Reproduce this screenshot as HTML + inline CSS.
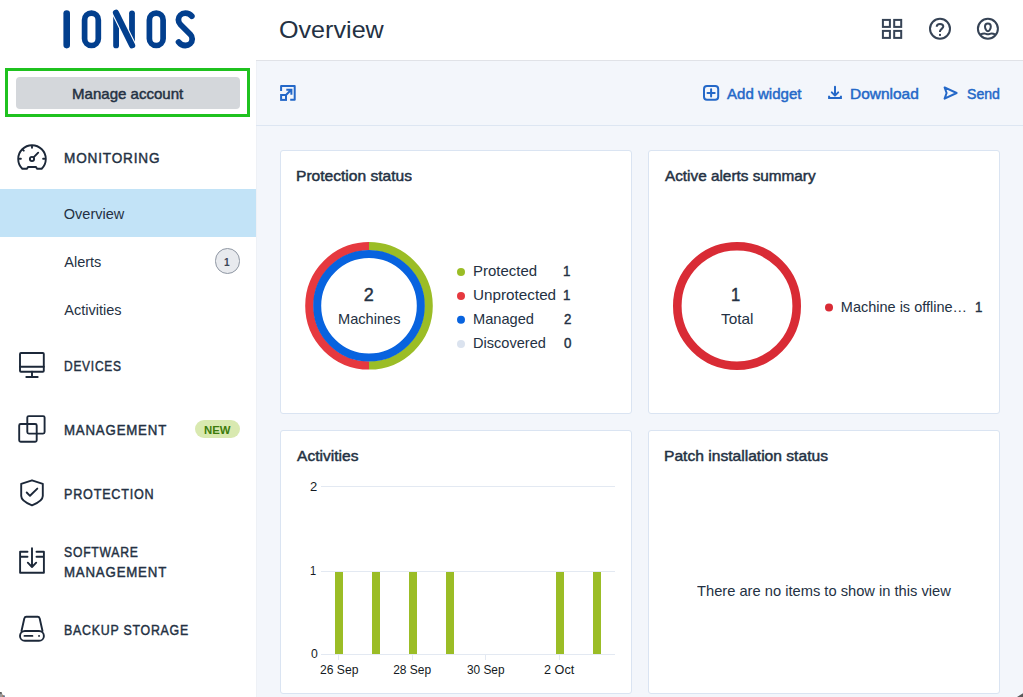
<!DOCTYPE html>
<html><head><meta charset="utf-8">
<style>
*{box-sizing:border-box;margin:0;padding:0}
html,body{width:1023px;height:697px;overflow:hidden;background:#f3f6fb;font-family:"Liberation Sans",sans-serif;color:#243143}
.a{position:absolute}
.t{position:absolute;white-space:nowrap;line-height:1}
.sb{position:absolute;left:0;top:0;width:256px;height:697px;background:#fff}
.nav{font-size:14.5px;font-weight:bold;transform-origin:0 0}
.sub{font-size:14.5px}
svg{position:absolute;overflow:visible}
.ic{fill:none;stroke:#1c2839;stroke-width:1.9;stroke-linecap:round;stroke-linejoin:round}
.hic{fill:none;stroke:#364355;stroke-width:2}
.bl{fill:none;stroke:#2468c8;stroke-width:2;stroke-linecap:round;stroke-linejoin:round}
.card{position:absolute;background:#fff;border:1px solid #dae4f2;border-radius:3px}
.ct{font-size:14.5px;font-weight:bold}
.lk{color:#2468c8;font-size:14.5px;font-weight:bold}
</style></head><body>

<!-- Sidebar -->
<div class="sb"></div>
<div class="a" style="left:256px;top:61px;width:1px;height:636px;background:#eef1f6"></div>

<!-- IONOS logo -->
<svg style="left:0;top:0" width="256" height="60" viewBox="0 0 256 60">
 <g fill="none" stroke="#023f8e" stroke-linecap="round" stroke-linejoin="round">
  <line x1="66.7" y1="13.6" x2="66.7" y2="45.1" stroke-width="6.6"/>
  <rect x="84.6" y="13.1" width="13.7" height="32.4" rx="6.85" stroke-width="5.7"/>
  <line x1="116.1" y1="13.3" x2="116.1" y2="45.4" stroke-width="5.8"/>
  <line x1="132" y1="13.3" x2="132" y2="45.4" stroke-width="5.8"/>
  <line x1="116" y1="12.8" x2="132.1" y2="45.3" stroke-width="8.4" stroke="#fff"/>
  <line x1="116" y1="12.8" x2="132.1" y2="45.3" stroke-width="6.2"/>
  <rect x="149.4" y="13.1" width="13.7" height="32.4" rx="6.85" stroke-width="5.7"/>
  <path d="M191.8,16.2 C190,14 187.6,13.2 185.3,13.2 C181.3,13.2 178.4,16.3 178.4,19.8 C178.4,21.8 179.2,23.3 180.4,24.5 L190.4,34.5 C191.6,35.7 192.2,37.2 192.2,39 C192.2,42.8 189,45.5 185.3,45.5 C182.6,45.5 180.2,44.2 178.6,42" stroke-width="5.8"/>
 </g>
</svg>

<!-- Manage account -->
<div class="a" style="left:5px;top:68px;width:245px;height:49px;border:3px solid #1fc21f"></div>
<div class="a" style="left:16px;top:77px;width:224px;height:32px;background:#d4d7db;border-radius:4px"></div>

<!-- Monitoring -->
<svg style="left:12px;top:138px" width="40" height="40" viewBox="0 0 40 40">
 <path class="ic" d="M10.3,30.8 A13.8,13.8 0 1 1 29.7,30.8 L25,30.8 L24,29 L16,29 L15,30.8 Z"/>
 <path class="ic" d="M20,8.4 V9.8 M10.9,11.8 L11.8,12.7 M7.4,20.7 H8.9 M31.1,20.7 H32.6 M21.6,19.3 L26.2,14.7"/>
 <circle class="ic" cx="20" cy="21" r="2.1"/>
</svg>

<div class="a" style="left:0;top:189px;width:256px;height:48px;background:#c2e3f7"></div>
<div class="a" style="left:214.5px;top:248px;width:25.5px;height:25.5px;border-radius:50%;background:#e8eaee;border:1px solid #8f97a3"></div>

<!-- Devices -->
<svg style="left:12px;top:346px" width="40" height="40" viewBox="0 0 40 40">
 <rect class="ic" x="8" y="7" width="23.8" height="18.8" rx="1"/>
 <path class="ic" d="M8,20.7 H31.8 M20,25.8 V30.6 M14.3,31 H25.7"/>
</svg>

<!-- Management -->
<svg style="left:12px;top:410px" width="40" height="40" viewBox="0 0 40 40">
 <rect class="ic" x="15.3" y="6.1" width="17.3" height="17.5" rx="1.5"/>
 <rect class="ic" x="7.2" y="14" width="17.5" height="17.8" rx="1.5"/>
</svg>
<div class="a" style="left:195px;top:420px;width:45px;height:18px;border-radius:9px;background:#d9e9b0"></div>

<!-- Protection -->
<svg style="left:12px;top:474px" width="40" height="40" viewBox="0 0 40 40">
 <path class="ic" d="M20,6.3 L9.2,9.8 V22 C9.2,26 14,29 20,31.3 C26,29 30.8,26 30.8,22 V9.8 Z"/>
 <path class="ic" d="M14.7,18.5 L18,21.8 L25.3,14.6"/>
</svg>

<!-- Software management -->
<svg style="left:12px;top:542px" width="40" height="40" viewBox="0 0 40 40">
 <path class="ic" d="M15.5,9.8 H8.1 V30.8 H31.9 V9.8 H24.5 M8.1,14.7 H15.5 M24.5,14.7 H31.9 M20,6.3 V25 M15.8,20.7 L20,25 L24.2,20.7"/>
</svg>

<!-- Backup storage -->
<svg style="left:12px;top:610px" width="40" height="40" viewBox="0 0 40 40">
 <path class="ic" d="M9.5,21 L12.3,8.5 C12.6,7.5 13.3,6.8 14.3,6.8 H25.7 C26.7,6.8 27.4,7.5 27.7,8.5 L30.5,21"/>
 <rect class="ic" x="8" y="21" width="23.9" height="9.8" rx="4.9"/>
 <path class="ic" d="M12.5,25.9 H20.4 M27,25.9 H27.1"/>
</svg>

<!-- Header -->
<div class="a" style="left:256px;top:0;width:767px;height:60px;background:#fff"></div>
<div class="a" style="left:256px;top:60px;width:767px;height:1px;background:#e0e2e7"></div>

<svg style="left:874px;top:10px" width="140" height="40" viewBox="0 0 140 40">
 <g class="hic">
  <rect x="8.9" y="9.9" width="7" height="7"/>
  <rect x="20.2" y="9.9" width="7" height="7"/>
  <rect x="8.9" y="20.9" width="7" height="7"/>
  <rect x="20.2" y="20.9" width="7" height="7"/>
  <circle cx="66" cy="18.75" r="10"/>
  <path d="M62.7,16.7 C62.7,14.9 64.2,13.9 66,13.9 C67.9,13.9 69.3,15 69.3,16.6 C69.3,18.5 66,19.3 66,21.3 V22.1" stroke-linecap="butt"/>
  <circle cx="113.9" cy="18.75" r="10"/>
  <path d="M113.9,13.4 C115.6,13.4 116.8,14.6 116.8,16.6 C116.8,18.8 115.2,21.2 113.9,21.2 C112.6,21.2 111,18.8 111,16.6 C111,14.6 112.2,13.4 113.9,13.4 Z"/>
  <path d="M106.2,24.7 C107.5,24 109,23.4 110.3,23.4 C111.5,23.4 112.5,24.3 113.9,24.3 C115.3,24.3 116.3,23.4 117.5,23.4 C118.8,23.4 120.3,24 121.5,24.7"/>
 </g>
 <rect x="65" y="23.9" width="2" height="2" fill="#3a4657"/>
</svg>

<!-- Toolbar -->
<div class="a" style="left:256px;top:125px;width:767px;height:1px;background:#dde6f2"></div>
<svg style="left:274px;top:78px" width="30" height="30" viewBox="0 0 30 30">
 <path d="M7.1,12.9 V8 H20.7 V21.7 H16.2" fill="none" stroke="#2468c8" stroke-width="2" stroke-linejoin="round"/>
 <rect x="7.1" y="17" width="4.9" height="4.9" fill="none" stroke="#2468c8" stroke-width="2"/>
 <path d="M12,17 L17.2,11.8 M12.3,11.8 H17.4 V16.8" fill="none" stroke="#2468c8" stroke-width="2"/>
</svg>

<svg style="left:696px;top:76px" width="330" height="34" viewBox="0 0 330 34">
 <rect class="bl" x="8" y="10" width="14.2" height="13.8" rx="3"/>
 <path class="bl" d="M15.1,13.3 V20.5 M11.5,16.9 H18.7" stroke-linecap="butt"/>
 <path class="bl" d="M139,10.8 V19.5 M135.8,16.4 L139,19.6 L142.2,16.4" stroke-linecap="butt" stroke-linejoin="miter"/>
 <path d="M133.1,19.8 V22 H144.9 V19.8" fill="none" stroke="#2468c8" stroke-width="2"/>
 <path class="bl" d="M248.6,11.4 L260.6,17 L248.6,22.6 L250.6,17 Z" stroke-width="1.8"/>
</svg>

<!-- Cards -->
<div class="card" style="left:280px;top:150px;width:352px;height:264px"></div>
<div class="card" style="left:648px;top:150px;width:352px;height:264px"></div>
<div class="card" style="left:280px;top:430px;width:352px;height:264px"></div>
<div class="card" style="left:648px;top:430px;width:352px;height:264px"></div>


<!-- Protection donut -->
<svg style="left:281px;top:151px" width="351" height="263" viewBox="281 151 351 263">
 <path d="M369,246.2 A59.6,59.6 0 0 1 369,365.4" fill="none" stroke="#9bbd26" stroke-width="8.4"/>
 <path d="M369,365.4 A59.6,59.6 0 0 1 369,246.2" fill="none" stroke="#e6393f" stroke-width="8.4"/>
 <circle cx="369" cy="305.8" r="51.8" fill="none" stroke="#0863df" stroke-width="8"/>
 <circle cx="461" cy="271.9" r="4" fill="#9bbd26"/>
 <circle cx="461" cy="295.9" r="4" fill="#e6393f"/>
 <circle cx="461" cy="319.8" r="4" fill="#0863df"/>
 <circle cx="461" cy="343.9" r="4" fill="#dbe3ef"/>
</svg>

<!-- Alerts donut -->
<svg style="left:649px;top:151px" width="350" height="263" viewBox="649 151 350 263">
 <circle cx="737" cy="306" r="59.7" fill="none" stroke="#d92b35" stroke-width="8.6"/>
 <circle cx="829" cy="307.6" r="4" fill="#d92b35"/>
</svg>

<!-- Activities chart -->
<svg style="left:281px;top:431px" width="350" height="263" viewBox="281 431 350 263">
 <g stroke="#e3e9f2" stroke-width="1">
  <line x1="321" y1="486.5" x2="615" y2="486.5"/>
  <line x1="321" y1="571.5" x2="615" y2="571.5"/>
  <line x1="321" y1="654.5" x2="615" y2="654.5"/>
  <line x1="338.5" y1="654" x2="338.5" y2="660"/>
  <line x1="412.5" y1="654" x2="412.5" y2="660"/>
  <line x1="485.5" y1="654" x2="485.5" y2="660"/>
  <line x1="559.5" y1="654" x2="559.5" y2="660"/>
 </g>
 <g fill="#9bbd26">
  <rect x="335" y="572" width="8" height="82"/>
  <rect x="372" y="572" width="8" height="82"/>
  <rect x="409" y="572" width="8" height="82"/>
  <rect x="446" y="572" width="8" height="82"/>
  <rect x="556" y="572" width="8" height="82"/>
  <rect x="593" y="572" width="8" height="82"/>
 </g>
</svg>


<svg style="left:0;top:0" width="1023" height="697" viewBox="0 0 1023 697">
 <path d="M0,692 C1,692.5 2,693.5 2.6,694.5 L4.5,697 H0 Z" fill="#9a9a9a"/>
 <path d="M0,692.3 H1.6 L2.2,693.6 H0 Z" fill="#3a3a3a"/>
 <rect x="2.2" y="695" width="1.4" height="2" fill="#b08060"/>
 <rect x="3.4" y="695.4" width="1.4" height="1.6" fill="#4a6590"/>
 <path d="M1023,693.2 L1017,697 H1023 Z" fill="#5a5a5a"/>
</svg>
<div class="t" style="left:71.76px;top:87.00px;font-size:14.5px;color:#243143;-webkit-text-stroke:0.45px currentColor;transform:scaleX(1.0374);transform-origin:0 0;">Manage account</div>
<div class="t" style="left:63.86px;top:151.00px;font-size:14.5px;color:#243143;-webkit-text-stroke:0.45px currentColor;letter-spacing:0.9px;transform:scaleX(0.9360);transform-origin:0 0;">MONITORING</div>
<div class="t" style="left:63.80px;top:207.00px;font-size:14.5px;color:#243143;">Overview</div>
<div class="t" style="left:64.30px;top:255.00px;font-size:14.5px;color:#243143;">Alerts</div>
<div class="t" style="left:64.30px;top:303.00px;font-size:14.5px;color:#243143;">Activities</div>
<div class="t" style="left:223.88px;top:257.00px;font-size:11px;color:#3c4656;font-weight:bold;transform:scaleX(0.9200);transform-origin:0 0;">1</div>
<div class="t" style="left:63.97px;top:359.00px;font-size:14.5px;color:#243143;-webkit-text-stroke:0.45px currentColor;letter-spacing:0.9px;transform:scaleX(0.8250);transform-origin:0 0;">DEVICES</div>
<div class="t" style="left:63.89px;top:423.00px;font-size:14.5px;color:#243143;-webkit-text-stroke:0.45px currentColor;letter-spacing:0.9px;transform:scaleX(0.9126);transform-origin:0 0;">MANAGEMENT</div>
<div class="t" style="left:203.67px;top:425.00px;font-size:11px;color:#3d7b0c;font-weight:bold;transform:scaleX(1.0320);transform-origin:0 0;">NEW</div>
<div class="t" style="left:63.93px;top:487.00px;font-size:14.5px;color:#243143;-webkit-text-stroke:0.45px currentColor;letter-spacing:0.9px;transform:scaleX(0.8696);transform-origin:0 0;">PROTECTION</div>
<div class="t" style="left:64.40px;top:545.00px;font-size:14.5px;color:#243143;-webkit-text-stroke:0.45px currentColor;letter-spacing:0.9px;transform:scaleX(0.8409);transform-origin:0 0;">SOFTWARE</div>
<div class="t" style="left:63.89px;top:565.00px;font-size:14.5px;color:#243143;-webkit-text-stroke:0.45px currentColor;letter-spacing:0.9px;transform:scaleX(0.9126);transform-origin:0 0;">MANAGEMENT</div>
<div class="t" style="left:63.95px;top:623.00px;font-size:14.5px;color:#243143;-webkit-text-stroke:0.45px currentColor;letter-spacing:0.9px;transform:scaleX(0.8524);transform-origin:0 0;">BACKUP STORAGE</div>
<div class="t" style="left:279.45px;top:18.00px;font-size:24px;color:#243143;transform:scaleX(1.0475);transform-origin:0 0;">Overview</div>
<div class="t" style="left:727.30px;top:87.00px;font-size:14.5px;color:#2468c8;-webkit-text-stroke:0.45px currentColor;transform:scaleX(1.0375);transform-origin:0 0;">Add widget</div>
<div class="t" style="left:849.93px;top:87.00px;font-size:14.5px;color:#2468c8;-webkit-text-stroke:0.45px currentColor;transform:scaleX(1.0667);transform-origin:0 0;">Download</div>
<div class="t" style="left:967.00px;top:87.00px;font-size:14.5px;color:#2468c8;-webkit-text-stroke:0.45px currentColor;transform:scaleX(0.9727);transform-origin:0 0;">Send</div>
<div class="t" style="left:296.23px;top:169.00px;font-size:14.5px;color:#243143;-webkit-text-stroke:0.45px currentColor;transform:scaleX(1.0738);transform-origin:0 0;">Protection status</div>
<div class="t" style="left:665.00px;top:169.00px;font-size:14.5px;color:#243143;-webkit-text-stroke:0.45px currentColor;transform:scaleX(1.0559);transform-origin:0 0;">Active alerts summary</div>
<div class="t" style="left:297.00px;top:449.00px;font-size:14.5px;color:#243143;-webkit-text-stroke:0.45px currentColor;transform:scaleX(1.0737);transform-origin:0 0;">Activities</div>
<div class="t" style="left:663.92px;top:449.00px;font-size:14.5px;color:#243143;-webkit-text-stroke:0.45px currentColor;transform:scaleX(1.0762);transform-origin:0 0;">Patch installation status</div>
<div class="t" style="left:363.80px;top:286.00px;font-size:18px;color:#243143;-webkit-text-stroke:0.45px currentColor;">2</div>
<div class="t" style="left:337.59px;top:312.00px;font-size:14.5px;color:#243143;transform:scaleX(1.0066);transform-origin:0 0;">Machines</div>
<div class="t" style="left:472.67px;top:264.00px;font-size:14.5px;color:#243143;transform:scaleX(1.0317);transform-origin:0 0;">Protected</div>
<div class="t" style="left:472.65px;top:288.00px;font-size:14.5px;color:#243143;transform:scaleX(1.0519);transform-origin:0 0;">Unprotected</div>
<div class="t" style="left:472.69px;top:312.00px;font-size:14.5px;color:#243143;transform:scaleX(1.0085);transform-origin:0 0;">Managed</div>
<div class="t" style="left:472.70px;top:336.00px;font-size:14.5px;color:#243143;transform:scaleX(1.0042);transform-origin:0 0;">Discovered</div>
<div class="t" style="left:562.66px;top:264.00px;font-size:14.5px;color:#243143;-webkit-text-stroke:0.45px currentColor;transform:scaleX(0.9200);transform-origin:0 0;">1</div>
<div class="t" style="left:562.66px;top:288.00px;font-size:14.5px;color:#243143;-webkit-text-stroke:0.45px currentColor;transform:scaleX(0.9200);transform-origin:0 0;">1</div>
<div class="t" style="left:564.02px;top:312.00px;font-size:14.5px;color:#243143;-webkit-text-stroke:0.45px currentColor;transform:scaleX(0.9200);transform-origin:0 0;">2</div>
<div class="t" style="left:563.82px;top:336.00px;font-size:14.5px;color:#243143;-webkit-text-stroke:0.45px currentColor;transform:scaleX(0.9200);transform-origin:0 0;">0</div>
<div class="t" style="left:731.29px;top:286.00px;font-size:18px;color:#243143;-webkit-text-stroke:0.45px currentColor;transform:scaleX(0.9200);transform-origin:0 0;">1</div>
<div class="t" style="left:721.00px;top:312.00px;font-size:14.5px;color:#243143;transform:scaleX(1.0600);transform-origin:0 0;">Total</div>
<div class="t" style="left:840.80px;top:300.00px;font-size:14.5px;color:#243143;">Machine is offline…</div>
<div class="t" style="left:974.56px;top:300.00px;font-size:14.5px;color:#243143;-webkit-text-stroke:0.45px currentColor;transform:scaleX(0.9200);transform-origin:0 0;">1</div>
<div class="t" style="left:310.17px;top:481.00px;font-size:12px;color:#141a22;transform:scaleX(1.0800);transform-origin:0 0;">2</div>
<div class="t" style="left:310.28px;top:565.00px;font-size:12px;color:#141a22;transform:scaleX(0.9200);transform-origin:0 0;">1</div>
<div class="t" style="left:310.70px;top:648.00px;font-size:12px;color:#141a22;transform:scaleX(1.0167);transform-origin:0 0;">0</div>
<div class="t" style="left:319.79px;top:664.00px;font-size:12px;color:#141a22;transform:scaleX(1.0108);transform-origin:0 0;">26 Sep</div>
<div class="t" style="left:393.20px;top:664.00px;font-size:12px;color:#141a22;">28 Sep</div>
<div class="t" style="left:467.01px;top:664.00px;font-size:12px;color:#141a22;transform:scaleX(0.9865);transform-origin:0 0;">30 Sep</div>
<div class="t" style="left:543.95px;top:664.00px;font-size:12px;color:#141a22;transform:scaleX(1.0536);transform-origin:0 0;">2 Oct</div>
<div class="t" style="left:696.80px;top:584.00px;font-size:14.5px;color:#243143;transform:scaleX(1.0127);transform-origin:0 0;">There are no items to show in this view</div>
</body></html>
